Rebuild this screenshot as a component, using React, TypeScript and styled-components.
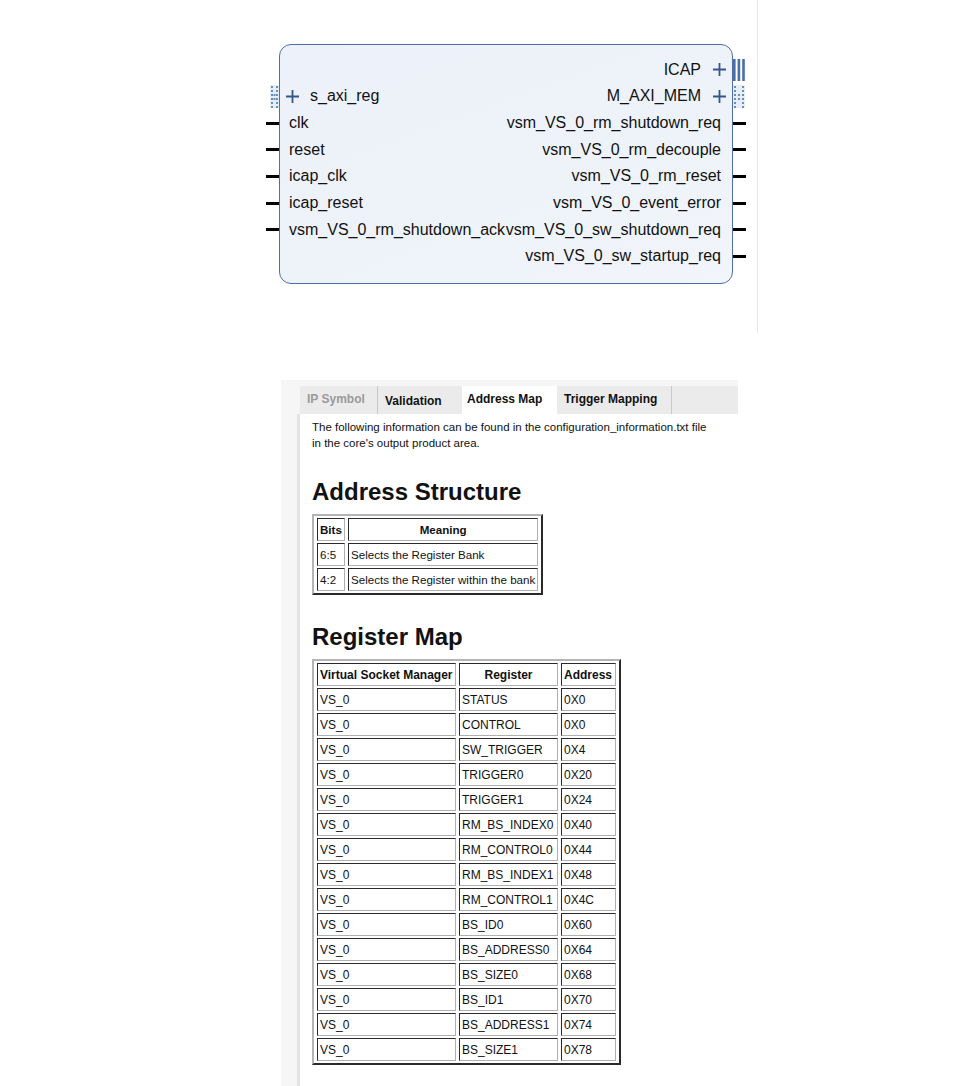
import * as React from 'react';
import styled, { createGlobalStyle } from 'styled-components';

const GlobalStyle = createGlobalStyle`
    html, body {
        margin: 0;
        padding: 0;
        background: #ffffff;
        font-family: 'Liberation Sans', Arial, sans-serif;
        color: #111;
    }
`;

const ROW = 26.7;

/* ---------- IP symbol canvas ---------- */

const Canvas = styled.div`
    width: 758px;
    height: 333px;
    border-right: 1px solid #e8e8e8;
    box-sizing: border-box;
    padding: 44px 0 0 266px;
`;

const Symbol = styled.div`
    display: flex;
    align-items: flex-start;
`;

const PinColumn = styled.div`
    width: 13px;
    padding-top: 12.3px;
    display: flex;
    flex-direction: column;
`;

const PinSlot = styled.div<{ side: 'left' | 'right' }>`
    height: ${ROW}px;
    display: flex;
    align-items: center;
    justify-content: ${({ side }) => (side === 'left' ? 'flex-end' : 'flex-start')};
`;

const Wire = styled.div`
    width: 13px;
    height: 3px;
    background: #000;
`;

const Box = styled.div`
    width: 454px;
    box-sizing: border-box;
    border: 1px solid #4f6ea6;
    border-radius: 12px;
    background: linear-gradient(160deg, #edf2fa 0%, #eef3fa 60%, #f2f5fa 100%);
    padding: 11.3px 5px 12.9px 5px;
    display: flex;
    justify-content: space-between;
`;

const PortColumn = styled.div<{ side: 'left' | 'right' }>`
    display: flex;
    flex-direction: column;
    align-items: ${({ side }) => (side === 'left' ? 'flex-start' : 'flex-end')};
`;

const Port = styled.div<{ side: 'left' | 'right'; iface?: boolean }>`
    height: ${ROW}px;
    display: flex;
    align-items: center;
    gap: ${({ side }) => (side === 'left' ? 10 : 11)}px;
    font-size: 16px;
    line-height: 1;
    white-space: nowrap;
    color: #111;
    padding-left: ${({ side, iface }) => (side === 'left' && !iface ? 4 : 0)}px;
    padding-right: ${({ side, iface }) => (side === 'right' && !iface ? 6 : 0)}px;
`;

const Plus = () => (
    <svg width="15" height="15" viewBox="0 0 15 15">
        <path d="M7.5 1 V14 M1 7.5 H14" stroke="#34558d" strokeWidth="1.8" fill="none" />
    </svg>
);

const BusPin = ({ width }: { width: number }) => {
    const dots: React.ReactNode[] = [];
    for (let y = 1; y < 22; y += 4) {
        dots.push(<rect key={`a${y}`} x={1} y={y} width={2} height={2} fill="#6a8ec2" />);
        dots.push(<rect key={`b${y}`} x={width - 3} y={y} width={2} height={2} fill="#6a8ec2" />);
    }
    for (let y = 9; y < 14; y += 4) {
        dots.push(<rect key={`c${y}`} x={width / 2 - 1} y={y} width={2} height={2} fill="#6a8ec2" />);
    }
    return (
        <svg width={width} height="23" viewBox={`0 0 ${width} 23`}>
            <rect x="0" y="0" width={width} height="23" fill="#e6eef8" />
            {dots}
        </svg>
    );
};

const BarsPin = () => (
    <svg width="12" height="22" viewBox="0 0 12 22">
        <rect x="0" y="0" width="2.6" height="22" fill="#4a6ea8" />
        <rect x="4.6" y="0" width="2.6" height="22" fill="#4a6ea8" />
        <rect x="9.2" y="0" width="2.6" height="22" fill="#4a6ea8" />
    </svg>
);

type PinKind = 'none' | 'wire' | 'bus' | 'bars';

const leftPorts: { name: string; iface?: boolean; pin: PinKind }[] = [
    { name: '', pin: 'none' },
    { name: 's_axi_reg', iface: true, pin: 'bus' },
    { name: 'clk', pin: 'wire' },
    { name: 'reset', pin: 'wire' },
    { name: 'icap_clk', pin: 'wire' },
    { name: 'icap_reset', pin: 'wire' },
    { name: 'vsm_VS_0_rm_shutdown_ack', pin: 'wire' },
    { name: '', pin: 'none' },
];

const rightPorts: { name: string; iface?: boolean; pin: PinKind }[] = [
    { name: 'ICAP', iface: true, pin: 'bars' },
    { name: 'M_AXI_MEM', iface: true, pin: 'bus' },
    { name: 'vsm_VS_0_rm_shutdown_req', pin: 'wire' },
    { name: 'vsm_VS_0_rm_decouple', pin: 'wire' },
    { name: 'vsm_VS_0_rm_reset', pin: 'wire' },
    { name: 'vsm_VS_0_event_error', pin: 'wire' },
    { name: 'vsm_VS_0_sw_shutdown_req', pin: 'wire' },
    { name: 'vsm_VS_0_sw_startup_req', pin: 'wire' },
];

const renderPin = (kind: PinKind, side: 'left' | 'right') => {
    if (kind === 'wire') return <Wire />;
    if (kind === 'bus') return <BusPin width={side === 'left' ? 9 : 12} />;
    if (kind === 'bars') return <BarsPin />;
    return null;
};

/* ---------- customization panel ---------- */

const Panel = styled.div`
    margin: 47px 0 0 281px;
    width: 457px;
    min-height: 706px;
    background: #f6f6f6;
    padding: 6px 0 0 16px;
    box-sizing: border-box;
`;

const TabBar = styled.div`
    display: flex;
    height: 28px;
    background: #ebebeb;
    margin-left: 3px;
`;

const Tab = styled.div<{ w: number; active?: boolean; muted?: boolean; sep?: boolean; drop?: number }>`
    width: ${({ w }) => w}px;
    box-sizing: border-box;
    padding: ${({ drop = 0 }) => 6 + drop}px 0 0 ${({ active }) => (active ? 5 : 7)}px;
    font-size: 12px;
    font-weight: bold;
    color: ${({ muted }) => (muted ? '#9a9a9a' : '#111')};
    background: ${({ active }) => (active ? '#ffffff' : 'transparent')};
    border-right: 1px solid ${({ sep }) => (sep ? '#c9c9c9' : 'transparent')};
    white-space: nowrap;
`;

const Content = styled.div`
    background: #ffffff;
    border-left: 3px solid #e3e3e3;
    padding: 5px 0 20px 12px;
    min-height: 660px;
`;

const Intro = styled.p`
    margin: 0;
    font-size: 11.5px;
    line-height: 16px;
    color: #111;
    width: 402px;
`;

const Heading = styled.h2<{ top: number }>`
    margin: ${({ top }) => top}px 0 8px;
    font-size: 24px;
    line-height: 28px;
    font-weight: bold;
    color: #111;
`;

const Table = styled.table<{ size: number }>`
    border-collapse: separate;
    border-spacing: 3px 2px;
    border: 2px solid;
    border-color: #b4b4b4 #2a2a2a #2a2a2a #b4b4b4;
    font-size: ${({ size }) => size}px;
    color: #111;
`;

const Cell = styled.td<{ w?: number; head?: boolean; center?: boolean }>`
    ${({ w }) => (w ? `width: ${w}px;` : '')}
    padding: 1px 2px 0 2px;
    border: 1.5px solid;
    border-color: #2a2a2a #b0b0b0 #b0b0b0 #2a2a2a;
    font-weight: ${({ head }) => (head ? 'bold' : 'normal')};
    text-align: ${({ center }) => (center ? 'center' : 'left')};
    white-space: nowrap;
    line-height: 20px;
`;

const Row = styled.tr``;

const registers: [string, string][] = [
    ['STATUS', '0X0'],
    ['CONTROL', '0X0'],
    ['SW_TRIGGER', '0X4'],
    ['TRIGGER0', '0X20'],
    ['TRIGGER1', '0X24'],
    ['RM_BS_INDEX0', '0X40'],
    ['RM_CONTROL0', '0X44'],
    ['RM_BS_INDEX1', '0X48'],
    ['RM_CONTROL1', '0X4C'],
    ['BS_ID0', '0X60'],
    ['BS_ADDRESS0', '0X64'],
    ['BS_SIZE0', '0X68'],
    ['BS_ID1', '0X70'],
    ['BS_ADDRESS1', '0X74'],
    ['BS_SIZE1', '0X78'],
];

export default function App() {
    return (
        <>
            <GlobalStyle />
            <Canvas>
                <Symbol>
                    <PinColumn>
                        {leftPorts.map((p, i) => (
                            <PinSlot key={i} side="left">
                                {renderPin(p.pin, 'left')}
                            </PinSlot>
                        ))}
                    </PinColumn>
                    <Box>
                        <PortColumn side="left">
                            {leftPorts.map((p, i) => (
                                <Port key={i} side="left" iface={p.iface}>
                                    {p.iface && <Plus />}
                                    {p.name}
                                </Port>
                            ))}
                        </PortColumn>
                        <PortColumn side="right">
                            {rightPorts.map((p, i) => (
                                <Port key={i} side="right" iface={p.iface}>
                                    {p.name}
                                    {p.iface && <Plus />}
                                </Port>
                            ))}
                        </PortColumn>
                    </Box>
                    <PinColumn>
                        {rightPorts.map((p, i) => (
                            <PinSlot key={i} side="right">
                                {renderPin(p.pin, 'right')}
                            </PinSlot>
                        ))}
                    </PinColumn>
                </Symbol>
            </Canvas>

            <Panel>
                <TabBar>
                    <Tab w={78} muted sep>
                        IP Symbol
                    </Tab>
                    <Tab w={84} drop={2}>
                        Validation
                    </Tab>
                    <Tab w={95} active>
                        Address Map
                    </Tab>
                    <Tab w={115} sep>
                        Trigger Mapping
                    </Tab>
                </TabBar>
                <Content>
                    <Intro>
                        The following information can be found in the configuration_information.txt file in the
                        core's output product area.
                    </Intro>

                    <Heading top={27}>Address Structure</Heading>
                    <Table size={11.6}>
                        <tbody>
                            <Row>
                                <Cell w={22} head>
                                    Bits
                                </Cell>
                                <Cell w={183} head center>
                                    Meaning
                                </Cell>
                            </Row>
                            <Row>
                                <Cell>6:5</Cell>
                                <Cell>Selects the Register Bank</Cell>
                            </Row>
                            <Row>
                                <Cell>4:2</Cell>
                                <Cell>Selects the Register within the bank</Cell>
                            </Row>
                        </tbody>
                    </Table>

                    <Heading top={28}>Register Map</Heading>
                    <Table size={12}>
                        <tbody>
                            <Row>
                                <Cell w={133} head>
                                    Virtual Socket Manager
                                </Cell>
                                <Cell w={93} head center>
                                    Register
                                </Cell>
                                <Cell w={49} head>
                                    Address
                                </Cell>
                            </Row>
                            {registers.map(([reg, addr]) => (
                                <Row key={reg}>
                                    <Cell>VS_0</Cell>
                                    <Cell>{reg}</Cell>
                                    <Cell>{addr}</Cell>
                                </Row>
                            ))}
                        </tbody>
                    </Table>
                </Content>
            </Panel>
        </>
    );
}
